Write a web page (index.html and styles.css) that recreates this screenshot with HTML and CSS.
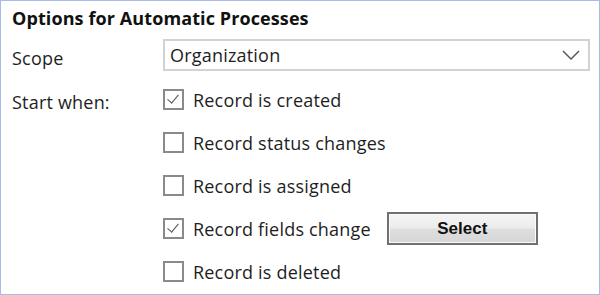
FILE: index.html
```html
<!DOCTYPE html>
<html lang="en">
<head>
    <meta charset="UTF-8">
    <title>Options for Automatic Processes</title>
    <link rel="stylesheet" href="styles.css">
</head>
<body>
    <div class="panel">
        <h1 class="title">Options for Automatic Processes</h1>

        <div class="field">
            <span class="field-label">Scope</span>
            <div class="dropdown">
                <span>Organization</span>
                <svg class="chevron" width="18" height="10" viewBox="0 0 18 10">
                    <path d="M1 1 L9 9 L17 1" fill="none" stroke="#5a5a5a" stroke-width="1.5"/>
                </svg>
            </div>
        </div>

        <div class="field field-top">
            <span class="field-label">Start when:</span>
            <div class="options">
                <label class="option"><span class="box checked"></span>Record is created</label>
                <label class="option"><span class="box"></span>Record status changes</label>
                <label class="option"><span class="box"></span>Record is assigned</label>
                <label class="option"><span class="box checked"></span>Record fields change<button class="select-btn">Select</button></label>
                <label class="option"><span class="box"></span>Record is deleted</label>
            </div>
        </div>
    </div>
</body>
</html>
```

FILE: styles.css
```css
body {
    margin: 0;
    font-family: 'Open Sans', 'Noto Sans', sans-serif;
    color: #1e1e1e;
    background: #fff;
}

.panel {
    width: 600px;
    height: 295px;
    box-sizing: border-box;
    border: 1px solid #a6bdea;
    padding: 0 9px 0 11px;
    overflow: hidden;
}

.title {
    margin: 0;
    padding-top: 2px;
    font-size: 18px;
    font-weight: bold;
    letter-spacing: 0.1px;
    line-height: 30px;
    color: #111;
}

.field {
    display: flex;
    align-items: center;
    margin-top: 6px;
}

.field-top {
    align-items: flex-start;
    margin-top: 7px;
}

.field-label {
    width: 151px;
    flex-shrink: 0;
    padding-top: 6px;
    font-size: 18px;
    letter-spacing: 0.2px;
}

.field-top .field-label {
    padding-top: 3px;
    line-height: 43px;
}

.dropdown {
    flex-grow: 1;
    height: 32px;
    box-sizing: border-box;
    border: 2px solid #d2d2d2;
    display: flex;
    align-items: center;
    justify-content: space-between;
    padding: 0 8px 0 5px;
    font-size: 18px;
    letter-spacing: 0.2px;
}

.chevron {
    display: block;
}

.options {
    display: flex;
    flex-direction: column;
}

.option {
    height: 43px;
    display: flex;
    align-items: center;
    font-size: 18px;
    letter-spacing: 0.2px;
}

.box {
    width: 21px;
    height: 21px;
    box-sizing: border-box;
    border: 2px solid #8a8a8a;
    margin-right: 9px;
    position: relative;
}

.box.checked::after {
    content: '';
    position: absolute;
    left: 5px;
    top: 1px;
    width: 5px;
    height: 10px;
    border-right: 1.5px solid #555;
    border-bottom: 1.5px solid #555;
    transform: rotate(40deg);
}

.select-btn {
    margin-left: 16px;
    width: 151px;
    height: 33px;
    border: 2px solid #707070;
    box-shadow: inset 0 0 0 1px #fbfbfb;
    background: linear-gradient(#f4f4f4, #ececec 48%, #dedede 52%, #d6d6d6);
    font-family: 'Liberation Sans', Arial, sans-serif;
    font-weight: bold;
    font-size: 17px;
    letter-spacing: 0;
    color: #111;
    padding: 0;
}
```
